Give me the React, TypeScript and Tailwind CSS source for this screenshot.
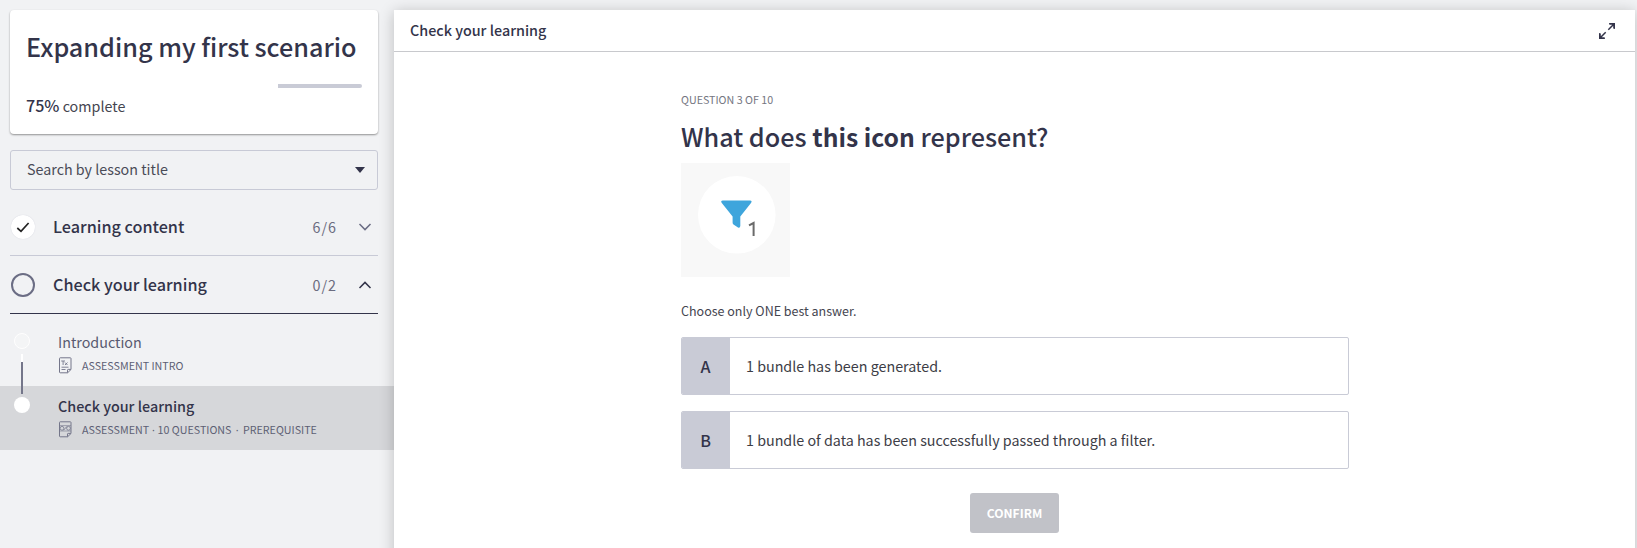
import React from "react";

function DocIcon({ children }: { children: React.ReactNode }) {
  return (
    <svg viewBox="0 0 14 17" className="h-[17px] w-[14px] shrink-0" fill="none" stroke="#74768a" strokeWidth="1">
      <path d="M1.5 1.5 Q1.5 .8 2.2 .8 H12.3 Q13 .8 13 1.5 V12.5 L9.6 15.8 H2.2 Q1.5 15.8 1.5 15 Z" />
      <path d="M12.8 12.4 H10.2 Q9.5 12.4 9.5 13.1 V15.6" />
      {children}
    </svg>
  );
}

function Section({ title, count, open }: { title: string; count: string; open: boolean }) {
  return (
    <div className={"flex h-[58px] items-center border-b " + (open ? "border-[#33344a]" : "border-[#c8cad6]")}>
      {open ? (
        <span className="ml-px size-6 rounded-full border-2 border-[#6b6d84]" />
      ) : (
        <span className="ml-px flex size-6 items-center justify-center rounded-full bg-white shadow-[0_0_1px_#c8cad6]">
          <svg viewBox="0 0 14 14" className="size-[14px]" fill="none" stroke="#222" strokeWidth="1.7">
            <path d="M1.3 8 L5 11.3 L12.6 3" />
          </svg>
        </span>
      )}
      <span className="ml-[18px] flex-1 pb-[2px] text-[16.2px] leading-6 font-medium">{title}</span>
      <span className="text-[14.3px] leading-6 tracking-[1px] text-[#6b6c80]">{count}</span>
      <svg
        viewBox="0 0 14 8"
        className={"mr-[6px] ml-[21px] h-2 w-[14px] " + (open ? "rotate-180" : "")}
        fill="none"
        stroke={open ? "#33344a" : "#6b6d84"}
        strokeWidth="1.5"
      >
        <path d="M1.5 1 L7 6.6 L12.5 1" />
      </svg>
    </div>
  );
}

function Option({ letter, text }: { letter: string; text: string }) {
  return (
    <div className="flex h-[58px] w-[668px] overflow-hidden rounded-[2px] border border-[#c9cbd6]">
      <span className="flex w-12 items-center justify-center bg-[#c9cbd6] pr-px pb-px text-[16.1px] leading-6 font-medium">{letter}</span>
      <span className="flex items-center pl-4 text-[14.3px] leading-6 text-[#3d3d46]">{text}</span>
    </div>
  );
}

export default function App() {
  return (
    <div className="flex h-[548px] w-[1637px] overflow-hidden bg-[#f1f2f4] font-['Noto_Sans_CJK_SC','Noto_Sans',sans-serif] text-[#33344a]">
      <aside className="w-[394px] shrink-0 pt-[10px]">
        <div className="ml-[10px] h-[124px] w-[368px] rounded-[4px] bg-white px-4 pt-5 shadow-[0_1px_2px_rgba(0,0,0,0.4)]">
          <h1 className="text-[25.2px] leading-8 font-medium whitespace-nowrap">Expanding my first scenario</h1>
          <div className="mt-[22px] flex h-1 justify-end">
            <div className="w-[84px] rounded-r-[2px] bg-[#c9cbd6]" />
          </div>
          <p className="mt-[5px] text-[14.3px] leading-6">
            <span className="text-[16.1px] font-medium">75%</span> <span className="text-[#44454f]">complete</span>
          </p>
        </div>
        <div className="mt-4 ml-[10px] flex h-10 w-[368px] items-center justify-between rounded-[3px] border border-[#c8cad6] pr-3 pl-4">
          <span className="pb-[2px] text-[14.3px] leading-6 text-[#4a4b57]">Search by lesson title</span>
          <svg viewBox="0 0 10 6" className="h-[6px] w-[10px]" fill="#33344a">
            <path d="M0 0 H10 L5 6 Z" />
          </svg>
        </div>
        <div className="mt-2 ml-[10px] w-[368px]">
          <Section title="Learning content" count="6/6" open={false} />
          <Section title="Check your learning" count="0/2" open />
        </div>
        <div className="mt-2 flex h-16">
          <div className="flex w-[44px] flex-col items-center pt-[11px]">
            <span className="size-4 rounded-full border border-white bg-[#f4f5f6]" />
            <span className="mt-[5px] h-2 w-[2px] bg-white" />
            <span className="h-6 w-[2px] bg-[#74768a]" />
          </div>
          <div className="pt-2 pl-[14px]">
            <p className="text-[14.3px] leading-6 text-[#585a70]">Introduction</p>
            <div className="mt-[3px] flex items-center text-[10.7px] leading-4 text-[#5d5f74]">
              <DocIcon>
                <path d="M3.2 4 H7 M5.1 4 V8 M7 5.5 L9.5 8 M9.5 5.5 L7 8 M3.5 10.2 H10.5 M3.5 12.5 H7.5" strokeWidth=".9" />
              </DocIcon>
              <span className="ml-[10px]">ASSESSMENT INTRO</span>
            </div>
          </div>
        </div>
        <div className="flex h-16 bg-[#d6d7da]">
          <div className="flex w-[44px] flex-col items-center">
            <span className="h-2 w-[2px] bg-[#74768a]" />
            <span className="mt-[3px] size-4 rounded-full bg-white" />
          </div>
          <div className="pt-2 pl-[14px]">
            <p className="text-[14.35px] leading-6 font-medium">Check your learning</p>
            <div className="mt-[3px] flex items-center text-[10.7px] leading-4 text-[#5d5f74]">
              <DocIcon>
                <path d="M1.5 4.6 H13 M1.5 10 H13" strokeWidth=".6" />
                <circle cx="4" cy="7.3" r="1.9" strokeWidth=".8" />
                <circle cx="10.5" cy="7.3" r="1.9" strokeWidth=".8" />
                <path d="M5.5 9.3 L9 5.3" strokeWidth=".8" />
              </DocIcon>
              <span className="ml-[10px]">ASSESSMENT</span>
              <span className="w-[8.5px] text-center font-['Noto_Sans']">·</span>
              <span>10 QUESTIONS</span>
              <span className="w-[11.5px] text-center font-['Noto_Sans']">·</span>
              <span>PREREQUISITE</span>
            </div>
          </div>
        </div>
      </aside>

      <main className="mt-[10px] h-[560px] w-[1241px] bg-white shadow-[0_2px_14px_rgba(0,0,0,0.22)]">
        <header className="flex h-[42px] items-center justify-between border-b border-[#c8c9cd] pr-5 pl-4">
          <h2 className="pb-[1px] text-[14.35px] leading-6 font-medium">Check your learning</h2>
          <svg viewBox="0 0 16 16" className="size-4" fill="none" stroke="#33344a" strokeWidth="1.5">
            <path d="M9.3 6.7 L14 2 M6.7 9.3 L2 14" />
            <path d="M10 0 H16 V6 L14.2 5.6 V3 L13 1.8 H10.4 Z M0 10 V16 H6 L5.6 14.2 H3 L1.8 13 V10.4 Z" fill="#33344a" stroke="none" />
          </svg>
        </header>
        <div className="ml-[287px] flex w-[668px] flex-col pt-[40px]">
          <p className="text-[10.7px] leading-4 text-[#74757f]">QUESTION 3 OF 10</p>
          <h3 className="mt-[12px] text-[25.2px] leading-8 font-medium whitespace-nowrap">
            What does <b className="text-[24.7px] font-bold">this icon</b> represent?
          </h3>
          <svg viewBox="0 0 109 114" className="mt-[11px] h-[114px] w-[109px]">
            <rect width="109" height="114" fill="#f8f8f8" />
            <circle cx="55.8" cy="51.8" r="38.8" fill="#fff" />
            <path
              d="M41.8 37.5 H69 Q71.6 37.5 70 40 L59.3 53.5 V63 Q59 65.5 57 64.5 L52.5 61.5 Q51.6 61 51.6 59.5 V53.5 L40.8 40 Q39.2 37.5 41.8 37.5 Z"
              fill="#3ea5dc"
            />
            <path d="M68 62.4 L72.6 60 V73" fill="none" stroke="#6a6a6a" strokeWidth="2" />
          </svg>
          <p className="mt-[22px] text-[12.5px] leading-6 text-[#44454f]">Choose only ONE best answer.</p>
          <div className="mt-[14px] flex flex-col gap-4">
            <Option letter="A" text="1 bundle has been generated." />
            <Option letter="B" text="1 bundle of data has been successfully passed through a filter." />
          </div>
          <button className="mt-6 mr-px h-10 w-[89px] self-center rounded-[3px] bg-[#c1c2c8] text-[12.1px] leading-6 font-bold text-white">CONFIRM</button>
        </div>
      </main>
    </div>
  );
}
